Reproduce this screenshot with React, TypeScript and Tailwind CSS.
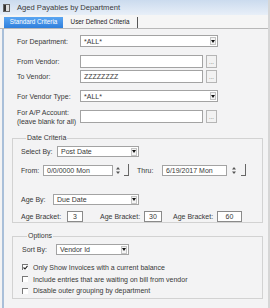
import React from "react";

const label = "text-[7px] leading-none text-[#383838]";

function Arrow() {
  return (
    <div className="ml-auto mr-[1px] flex h-[8px] w-[6px] items-center justify-center border border-[#c4c4c4] bg-[#f4f4f4]">
      <svg width="4" height="3" viewBox="0 0 4 3">
        <path d="M0 0h4L2 3z" fill="#111" />
      </svg>
    </div>
  );
}

function Select({ value, className }: { value: string; className: string }) {
  return (
    <div className={`flex items-center border border-[#a3a3a3] bg-white ${className}`}>
      <span className={`${label} pl-[3px]`}>{value}</span>
      <Arrow />
    </div>
  );
}

function Field({ value, className }: { value?: string; className: string }) {
  return (
    <div className={`flex items-center border border-[#a3a3a3] bg-white ${className}`}>
      {value && <span className={`${label} pl-[3px]`}>{value}</span>}
    </div>
  );
}

function Dots() {
  return (
    <div className="ml-[3px] flex h-full w-[11px] items-end justify-center border border-[#b5b5b5] bg-[#f2f2f2] pb-[2px]">
      <span className="text-[6px] leading-none text-[#555]">...</span>
    </div>
  );
}

function Spin() {
  return (
    <svg width="4" height="9" viewBox="0 0 4 9" className="shrink-0">
      <path d="M0 3.5L2 1L4 3.5z M0 5.5L2 8L4 5.5z" fill="#555" />
    </svg>
  );
}

function Check({ on }: { on?: boolean }) {
  return (
    <div className="flex h-[6px] w-[6px] items-center justify-center border-l border-t border-[#777] bg-white">
      {on && (
        <svg width="5" height="5" viewBox="0 0 5 5">
          <path d="M0.5 2.5L2 4L4.5 0.8" stroke="#222" strokeWidth="1.1" fill="none" />
        </svg>
      )}
    </div>
  );
}

function TopRow({ text, children, className }: { text: React.ReactNode; children: React.ReactNode; className: string }) {
  return (
    <div className={`flex items-center ${className}`}>
      <div className={`${label} w-[63px] shrink-0`}>{text}</div>
      {children}
    </div>
  );
}

export default function App() {
  return (
    <div className="h-[308px] w-[270px] overflow-hidden border-r-2 border-[#d6d6d6] bg-[#f3f3f4] font-['Liberation_Sans',Arial,sans-serif]">
      <div className="flex h-[15px] items-center bg-gradient-to-b from-[#cbdbee] to-[#e8eff8] pl-[3px]">
        <svg width="7" height="8" viewBox="0 0 7 8">
          <rect x="0.5" y="0.5" width="6" height="7" fill="#ddd" stroke="#666" />
          <rect x="1" y="1" width="2" height="6" fill="#333" />
        </svg>
        <span className="ml-[7px] text-[7.6px] leading-none text-[#3a3a3a]">Aged Payables by Department</span>
      </div>
      <div className="flex h-[14px] items-center border-b border-[#b8b8b8] bg-[#f5f5f5] pl-[4px] pt-[1px]">
        <div className="flex h-[11px] w-[59px] items-center justify-center bg-gradient-to-b from-[#5aa6f2] to-[#2f7fdc]">
          <span className="text-[6.3px] leading-none text-white">Standard Criteria</span>
        </div>
        <div className="flex h-[11px] w-[75px] items-center justify-center border-r border-[#555]">
          <span className="text-[6.3px] leading-none text-[#222]">User Defined Criteria</span>
        </div>
      </div>
      <div className="ml-[2px] flex h-[279px] flex-col border-l-2 border-[#a9bfd9]">
        <div className="pl-[13px]">
          <TopRow text="For Department:" className="mt-[6px] h-[12px]">
            <Select value="*ALL*" className="h-full w-[138px]" />
          </TopRow>
          <TopRow text="From Vendor:" className="mt-[8px] h-[13px]">
            <Field className="h-full w-[123px]" />
            <Dots />
          </TopRow>
          <TopRow text="To Vendor:" className="mt-[2px] h-[13px]">
            <Field value="ZZZZZZZZ" className="h-full w-[123px]" />
            <Dots />
          </TopRow>
          <TopRow text="For Vendor Type:" className="mt-[7px] h-[12px]">
            <Select value="*ALL*" className="h-full w-[138px]" />
          </TopRow>
          <TopRow
            text={
              <>
                For A/P Account:
                <br />
                <span className="mt-[2px] block">(leave blank for all)</span>
              </>
            }
            className="mt-[5px] h-[19px]"
          >
            <Field className="h-[13px] w-[123px]" />
            <div className="h-[13px]">
              <Dots />
            </div>
          </TopRow>
        </div>

        <fieldset className="ml-[8px] mt-[8px] w-[251px] border border-[#d2d2d2] pl-[8px]">
          <legend className={`${label} ml-[5px] h-[8px] px-[1px] leading-[8px]`}>Date Criteria</legend>
          <div className="mt-[4px] flex h-[11px] items-center">
            <span className={`${label} w-[36px]`}>Select By:</span>
            <Select value="Post Date" className="h-full w-[82px]" />
          </div>
          <div className="mt-[7px] flex h-[12px] items-center">
            <span className={`${label} w-[22px]`}>From:</span>
            <Field value="0/0/0000 Mon" className="h-[11px] w-[70px]" />
            <div className="ml-[3px]">
              <Spin />
            </div>
            <div className="ml-[4px] h-[12px] w-[5px] border-b border-r border-[#666]" />
            <span className={`${label} ml-[8px] w-[25px]`}>Thru:</span>
            <Field value="6/19/2017 Mon" className="h-[11px] w-[65px]" />
            <div className="ml-[5px]">
              <Spin />
            </div>
            <div className="ml-[5px] h-[12px] w-[5px] border-b border-r border-[#666]" />
          </div>
          <div className="mt-[18px] flex h-[11px] items-center">
            <span className={`${label} w-[32px]`}>Age By:</span>
            <Select value="Due Date" className="h-full w-[86px]" />
          </div>
          <div className="mt-[6px] flex h-[11px] items-center">
            <span className={`${label} w-[46px]`}>Age Bracket:</span>
            <div className={`${label} flex h-full w-[16px] items-center justify-center border border-[#8a8a8a] bg-white`}>3</div>
            <span className={`${label} ml-[17px] w-[44px]`}>Age Bracket:</span>
            <div className={`${label} flex h-full w-[18px] items-center justify-center border border-[#8a8a8a] bg-white`}>30</div>
            <span className={`${label} ml-[11px] w-[44px]`}>Age Bracket:</span>
            <div className={`${label} flex h-full w-[25px] items-center justify-center border border-[#8a8a8a] bg-white`}>60</div>
          </div>
        </fieldset>

        <fieldset className="ml-[8px] mt-[9px] w-[251px] border border-[#d2d2d2] pb-[2px] pl-[9px]">
          <legend className={`${label} ml-[5px] h-[8px] px-[1px] leading-[8px]`}>Options</legend>
          <div className="mt-[4px] flex h-[11px] items-center">
            <span className={`${label} w-[34px]`}>Sort By:</span>
            <Select value="Vendor Id" className="h-full w-[73px]" />
          </div>
          <div className="mt-[6px] flex h-[12px] items-center">
            <Check on />
            <span className={`${label} ml-[5px]`}>Only Show Invoices with a current balance</span>
          </div>
          <div className="flex h-[12px] items-center">
            <Check />
            <span className={`${label} ml-[5px]`}>Include entries that are waiting on bill from vendor</span>
          </div>
          <div className="flex h-[11px] items-center">
            <Check />
            <span className={`${label} ml-[5px]`}>Disable outer grouping by department</span>
          </div>
        </fieldset>
      </div>
    </div>
  );
}
